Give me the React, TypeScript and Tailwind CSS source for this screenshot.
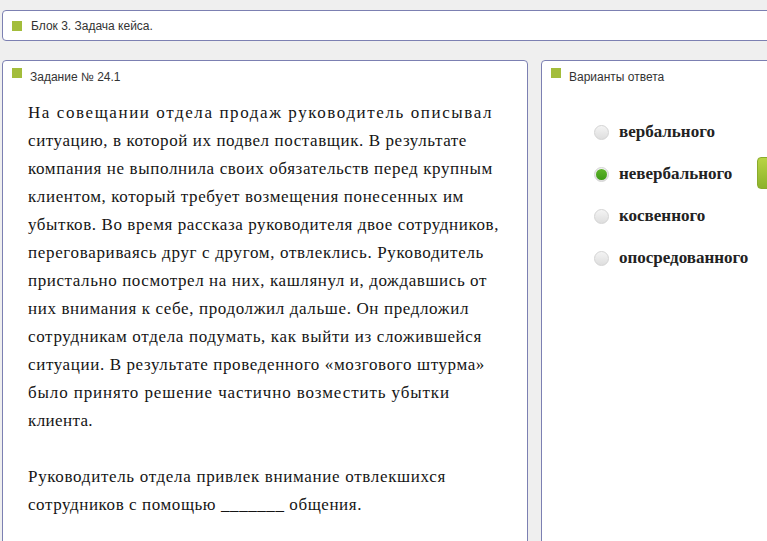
import React, { useLayoutEffect, useRef, useState } from "react";

const Square = () => <span className="inline-block w-[10px] h-[10px] bg-[#a3bd3b] shrink-0" />;

function Radio({ checked }: { checked?: boolean }) {
  return (
    <span className="relative inline-flex items-center justify-center w-[15px] h-[15px] rounded-full border border-[#d4d4d4] bg-gradient-to-b from-[#f4f4f4] to-[#dedede] shrink-0">
      {checked && <span className="w-[11px] h-[11px] rounded-full bg-gradient-to-b from-[#5fb52a] to-[#3e9a16]" />}
    </span>
  );
}

function Header({ text }: { text: string }) {
  return (
    <div className="flex items-start gap-[8px] pl-[9px] pt-[7px] h-[23px]">
      <Square />
      <span className="text-[12px] leading-[14px] mt-[2px] text-[#333]">{text}</span>
    </div>
  );
}

function FitLine({ text, width }: { text: string; width: number }) {
  const ref = useRef<HTMLSpanElement>(null);
  const [ls, setLs] = useState(1);
  useLayoutEffect(() => {
    const el = ref.current;
    if (!el) return;
    el.style.letterSpacing = "0px";
    const natural = el.getBoundingClientRect().width;
    const v = (width - natural) / text.length;
    setLs(Math.max(0, Math.min(3, v)));
  }, [text, width]);
  return (
    <div className="h-[28px] whitespace-nowrap">
      <span ref={ref} className="inline-block" style={{ letterSpacing: `${ls}px` }}>
        {text}
      </span>
    </div>
  );
}

const para1: [string, number][] = [
  ["На совещании отдела продаж руководитель описывал", 493],
  ["ситуацию, в которой их подвел поставщик. В результате", 467],
  ["компания не выполнила своих обязательств перед крупным", 493],
  ["клиентом, который требует возмещения понесенных им", 464],
  ["убытков. Во время рассказа руководителя двое сотрудников,", 499],
  ["переговариваясь друг с другом, отвлеклись. Руководитель", 484],
  ["пристально посмотрел на них, кашлянул и, дождавшись от", 487],
  ["них внимания к себе, продолжил дальше. Он предложил", 469],
  ["сотрудникам отдела подумать, как выйти из сложившейся", 482],
  ["ситуации. В результате проведенного «мозгового штурма»", 485],
  ["было принято решение частично возместить убытки", 450],
  ["клиента.", 93],
];

const para2: [string, number][] = [
  ["Руководитель отдела привлек внимание отвлекшихся", 446],
  ["сотрудников с помощью _______ общения.", 362],
];

export default function App() {
  const options = ["вербального", "невербального", "косвенного", "опосредованного"];
  const serif = { fontFamily: '"Liberation Serif", "Times New Roman", serif' };
  return (
    <div className="w-[767px] h-[541px] overflow-hidden bg-[#efefef] flex flex-col" style={{ fontFamily: '"Liberation Sans", Arial, sans-serif' }}>
      <div className="mt-[10px] ml-[2px] w-[800px] h-[31px] shrink-0 bg-white border border-[#7c80b2] rounded-[4px] flex items-center pl-[9px] gap-[9px]">
        <Square />
        <span className="text-[12px] text-[#333]">Блок 3. Задача кейса.</span>
      </div>
      <div className="mt-[19px] ml-[2px] flex gap-[13px] w-[800px]">
        <div className="w-[526px] h-[500px] shrink-0 bg-white border border-[#7c80b2] rounded-[4px]">
          <Header text="Задание № 24.1" />
          <div className="pl-[25px] pt-[15px] text-[17px] leading-[28px] text-[#151515]" style={serif}>
            <div>
              {para1.map(([t, end]) => (
                <FitLine key={t} text={t} width={end - 28} />
              ))}
            </div>
            <div className="mt-[28px]">
              {para2.map(([t, end]) => (
                <FitLine key={t} text={t} width={end - 28} />
              ))}
            </div>
          </div>
        </div>
        <div className="w-[260px] h-[500px] shrink-0 bg-white border border-[#7c80b2] rounded-[4px] relative">
          <Header text="Варианты ответа" />
          <div className="pl-[52px] pt-[37px] flex flex-col gap-[20px]">
            {options.map((o, i) => (
              <div key={o} className="flex items-center gap-[10px] h-[22px]">
                <Radio checked={i === 1} />
                <span className="text-[17px] font-bold text-[#222]" style={serif}>{o}</span>
              </div>
            ))}
          </div>
          <div className="absolute left-[215px] top-[96px] w-[40px] h-[32px] rounded-[4px] bg-gradient-to-b from-[#b8d443] to-[#8cb22b] border border-[#8aab2c]" />
        </div>
      </div>
    </div>
  );
}
